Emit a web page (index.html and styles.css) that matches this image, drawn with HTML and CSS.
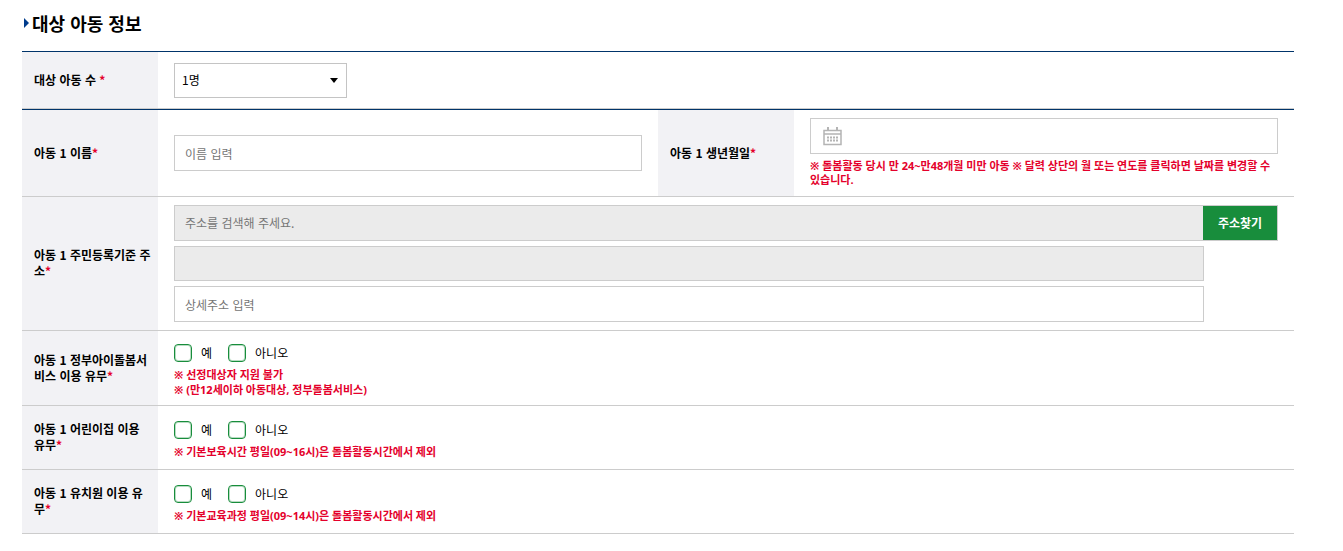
FILE: index.html
```html
<!DOCTYPE html>
<html lang="ko">
<head>
<meta charset="utf-8">
<meta name="viewport" content="width=device-width, initial-scale=1">
<title>대상 아동 정보</title>
<link rel="stylesheet" href="styles.css">
</head>
<body>
<main class="page">
  <h2 class="title"><svg class="title-mark" viewBox="0 0 5 10" aria-hidden="true"><path d="M0 0L5 5L0 10Z"/></svg>대상 아동 정보</h2>

  <table class="form-table">
    <colgroup><col class="col-label"><col></colgroup>
    <tbody>
      <tr class="row-count">
        <th scope="row"><label for="count">대상 아동 수 <span class="req">*</span></label></th>
        <td>
          <div class="select-box">
            <select id="count" class="select"><option>1명</option><option>2명</option><option>3명</option></select>
            <svg class="select-arrow" viewBox="0 0 8 5" aria-hidden="true"><path d="M0 0H8L4 5Z"/></svg>
          </div>
        </td>
      </tr>
    </tbody>
  </table>

  <table class="form-table">
    <colgroup><col class="col-label"><col><col class="col-label"><col></colgroup>
    <tbody>
      <tr>
        <th scope="row"><label for="name">아동 1 이름<span class="req">*</span></label></th>
        <td><input id="name" class="field" type="text" placeholder="이름 입력"></td>
        <th scope="row"><label for="birth">아동 1 생년월일<span class="req">*</span></label></th>
        <td>
          <div class="date-box">
            <input id="birth" class="field field-date" type="text">
            <svg class="date-icon" viewBox="0 0 19 19" aria-hidden="true">
              <path class="cal-line" d="M1 3.5H18V17.5H1ZM1 7H18"/>
              <path class="cal-ring" d="M5 0V4M14 0V4"/>
              <path class="cal-dots" d="M4 10.5H15M4 13.5H15"/>
            </svg>
          </div>
          <p class="note">※ 돌봄활동 당시 만 24~만48개월 미만 아동 ※ 달력 상단의 월 또는 연도를 클릭하면 날짜를 변경할 수 있습니다.</p>
        </td>
      </tr>
      <tr>
        <th scope="row"><label for="address">아동 1 주민등록기준 주소<span class="req">*</span></label></th>
        <td colspan="3">
          <div class="address">
            <div class="search">
              <input id="address" class="search-input" type="text" placeholder="주소를 검색해 주세요." readonly>
              <button class="search-button" type="button">주소찾기</button>
            </div>
            <input class="field field-short field-base" type="text" aria-label="기본주소" readonly>
            <input class="field field-short" type="text" aria-label="상세주소" placeholder="상세주소 입력">
          </div>
        </td>
      </tr>
      <tr>
        <th scope="row">아동 1 정부아이돌봄서비스 이용 유무<span class="req">*</span></th>
        <td colspan="3" class="choice-cell">
          <div class="choices">
            <label class="choice"><input class="check" type="checkbox" name="care">예</label>
            <label class="choice"><input class="check" type="checkbox" name="care">아니오</label>
          </div>
          <p class="note note-choice">※ 선정대상자 지원 불가<br>※ (만12세이하 아동대상, 정부돌봄서비스)</p>
        </td>
      </tr>
      <tr>
        <th scope="row">아동 1 어린이집 이용 유무<span class="req">*</span></th>
        <td colspan="3" class="choice-cell choice-cell-short">
          <div class="choices">
            <label class="choice"><input class="check" type="checkbox" name="daycare">예</label>
            <label class="choice"><input class="check" type="checkbox" name="daycare">아니오</label>
          </div>
          <p class="note note-choice">※ 기본보육시간 평일(09~16시)은 돌봄활동시간에서 제외</p>
        </td>
      </tr>
      <tr>
        <th scope="row">아동 1 유치원 이용 유무<span class="req">*</span></th>
        <td colspan="3" class="choice-cell choice-cell-short">
          <div class="choices">
            <label class="choice"><input class="check" type="checkbox" name="kinder">예</label>
            <label class="choice"><input class="check" type="checkbox" name="kinder">아니오</label>
          </div>
          <p class="note note-choice">※ 기본교육과정 평일(09~14시)은 돌봄활동시간에서 제외</p>
        </td>
      </tr>
    </tbody>
  </table>
</main>
</body>
</html>
```
FILE: styles.css
```css
* { box-sizing: border-box; }

body {
  margin: 0;
  background: #fff;
  color: #000;
  font-family: "Noto Sans CJK KR", sans-serif;
  font-size: 12px;
  line-height: 16px;
}

input, select, button { font: inherit; color: inherit; margin: 0; }

.page { padding: 8px 49px 16px 22px; }

.title {
  display: flex;
  align-items: center;
  gap: 3px;
  margin: 0 0 13px;
  padding-left: 2px;
  font-size: 18px;
  line-height: 30px;
  font-weight: 700;
}
.title-mark { width: 5px; height: 10px; fill: #003c8c; }

.form-table {
  width: 100%;
  table-layout: fixed;
  border-collapse: separate;
  border-spacing: 0;
  border-top: 1px solid #00346a;
}
.col-label { width: 136px; }
.form-table th {
  padding: 0 6px 1px 12px;
  background: #f2f2f5;
  border-bottom: 1px solid #ccc;
  font-weight: 700;
  text-align: left;
  vertical-align: middle;
  word-break: break-all;
}
.form-table td {
  padding: 8px 16px;
  border-bottom: 1px solid #ccc;
  vertical-align: middle;
}
.form-table .choice-cell { padding: 13px 16px 7px; }
.form-table .choice-cell-short { padding: 15px 16px 9px; }
.row-count { height: 57px; }
.req { color: #e4002b; }

.select-box { position: relative; width: 173px; }
.select {
  display: block;
  width: 100%;
  height: 35px;
  padding: 0 24px 0 7px;
  appearance: none;
  background: #fff;
  border: 1px solid #c4c4c4;
  border-radius: 0;
}
.select-arrow { position: absolute; right: 9px; top: 15px; width: 8px; height: 5px; pointer-events: none; }

.field {
  display: block;
  width: 100%;
  height: 36px;
  padding: 0 10px;
  background: #fff;
  border: 1px solid #ccc;
  border-radius: 0;
}
::placeholder { color: #757575; opacity: 1; }

.date-box { position: relative; }
.field-date { padding-left: 40px; }
.date-icon { position: absolute; left: 13px; top: 9px; width: 19px; height: 19px; fill: none; }
.cal-line { stroke: #b4b4b4; stroke-width: 1.5; }
.cal-ring { stroke: #b4b4b4; stroke-width: 2; }
.cal-dots { stroke: #b4b4b4; stroke-width: 2; stroke-dasharray: 2 1; }

.note {
  margin: 5px 0 1px;
  color: #e4002b;
  font-family: "Noto Sans", "Noto Sans CJK KR", sans-serif;
  font-size: 11px;
  font-weight: 700;
  line-height: 14px;
}
.note-choice { line-height: 15px; }

.address { display: flex; flex-direction: column; gap: 5px; }
.search { display: flex; height: 36px; border: 1px solid #ccc; background: #ebebeb; }
.search-input { flex: 1; min-width: 0; padding: 0 10px; border: 0; background: transparent; }
.search-button {
  flex: 0 0 74px;
  padding: 0;
  border: 0;
  background: #188d3c;
  color: #fff;
  font-weight: 700;
}
.field-short { width: calc(100% - 74px); }
.field-base { height: 35px; background: #ebebeb; }

.choices { display: flex; gap: 16px; height: 18px; }
.choice { display: flex; align-items: center; gap: 9px; }
.check {
  width: 18px;
  height: 18px;
  appearance: none;
  background: #fff;
  border: 1px solid #188d3c;
  border-radius: 4px;
  box-shadow: inset 0 0 0 1px #b9dcc3;
}
.check:checked { background: #188d3c; }
```
